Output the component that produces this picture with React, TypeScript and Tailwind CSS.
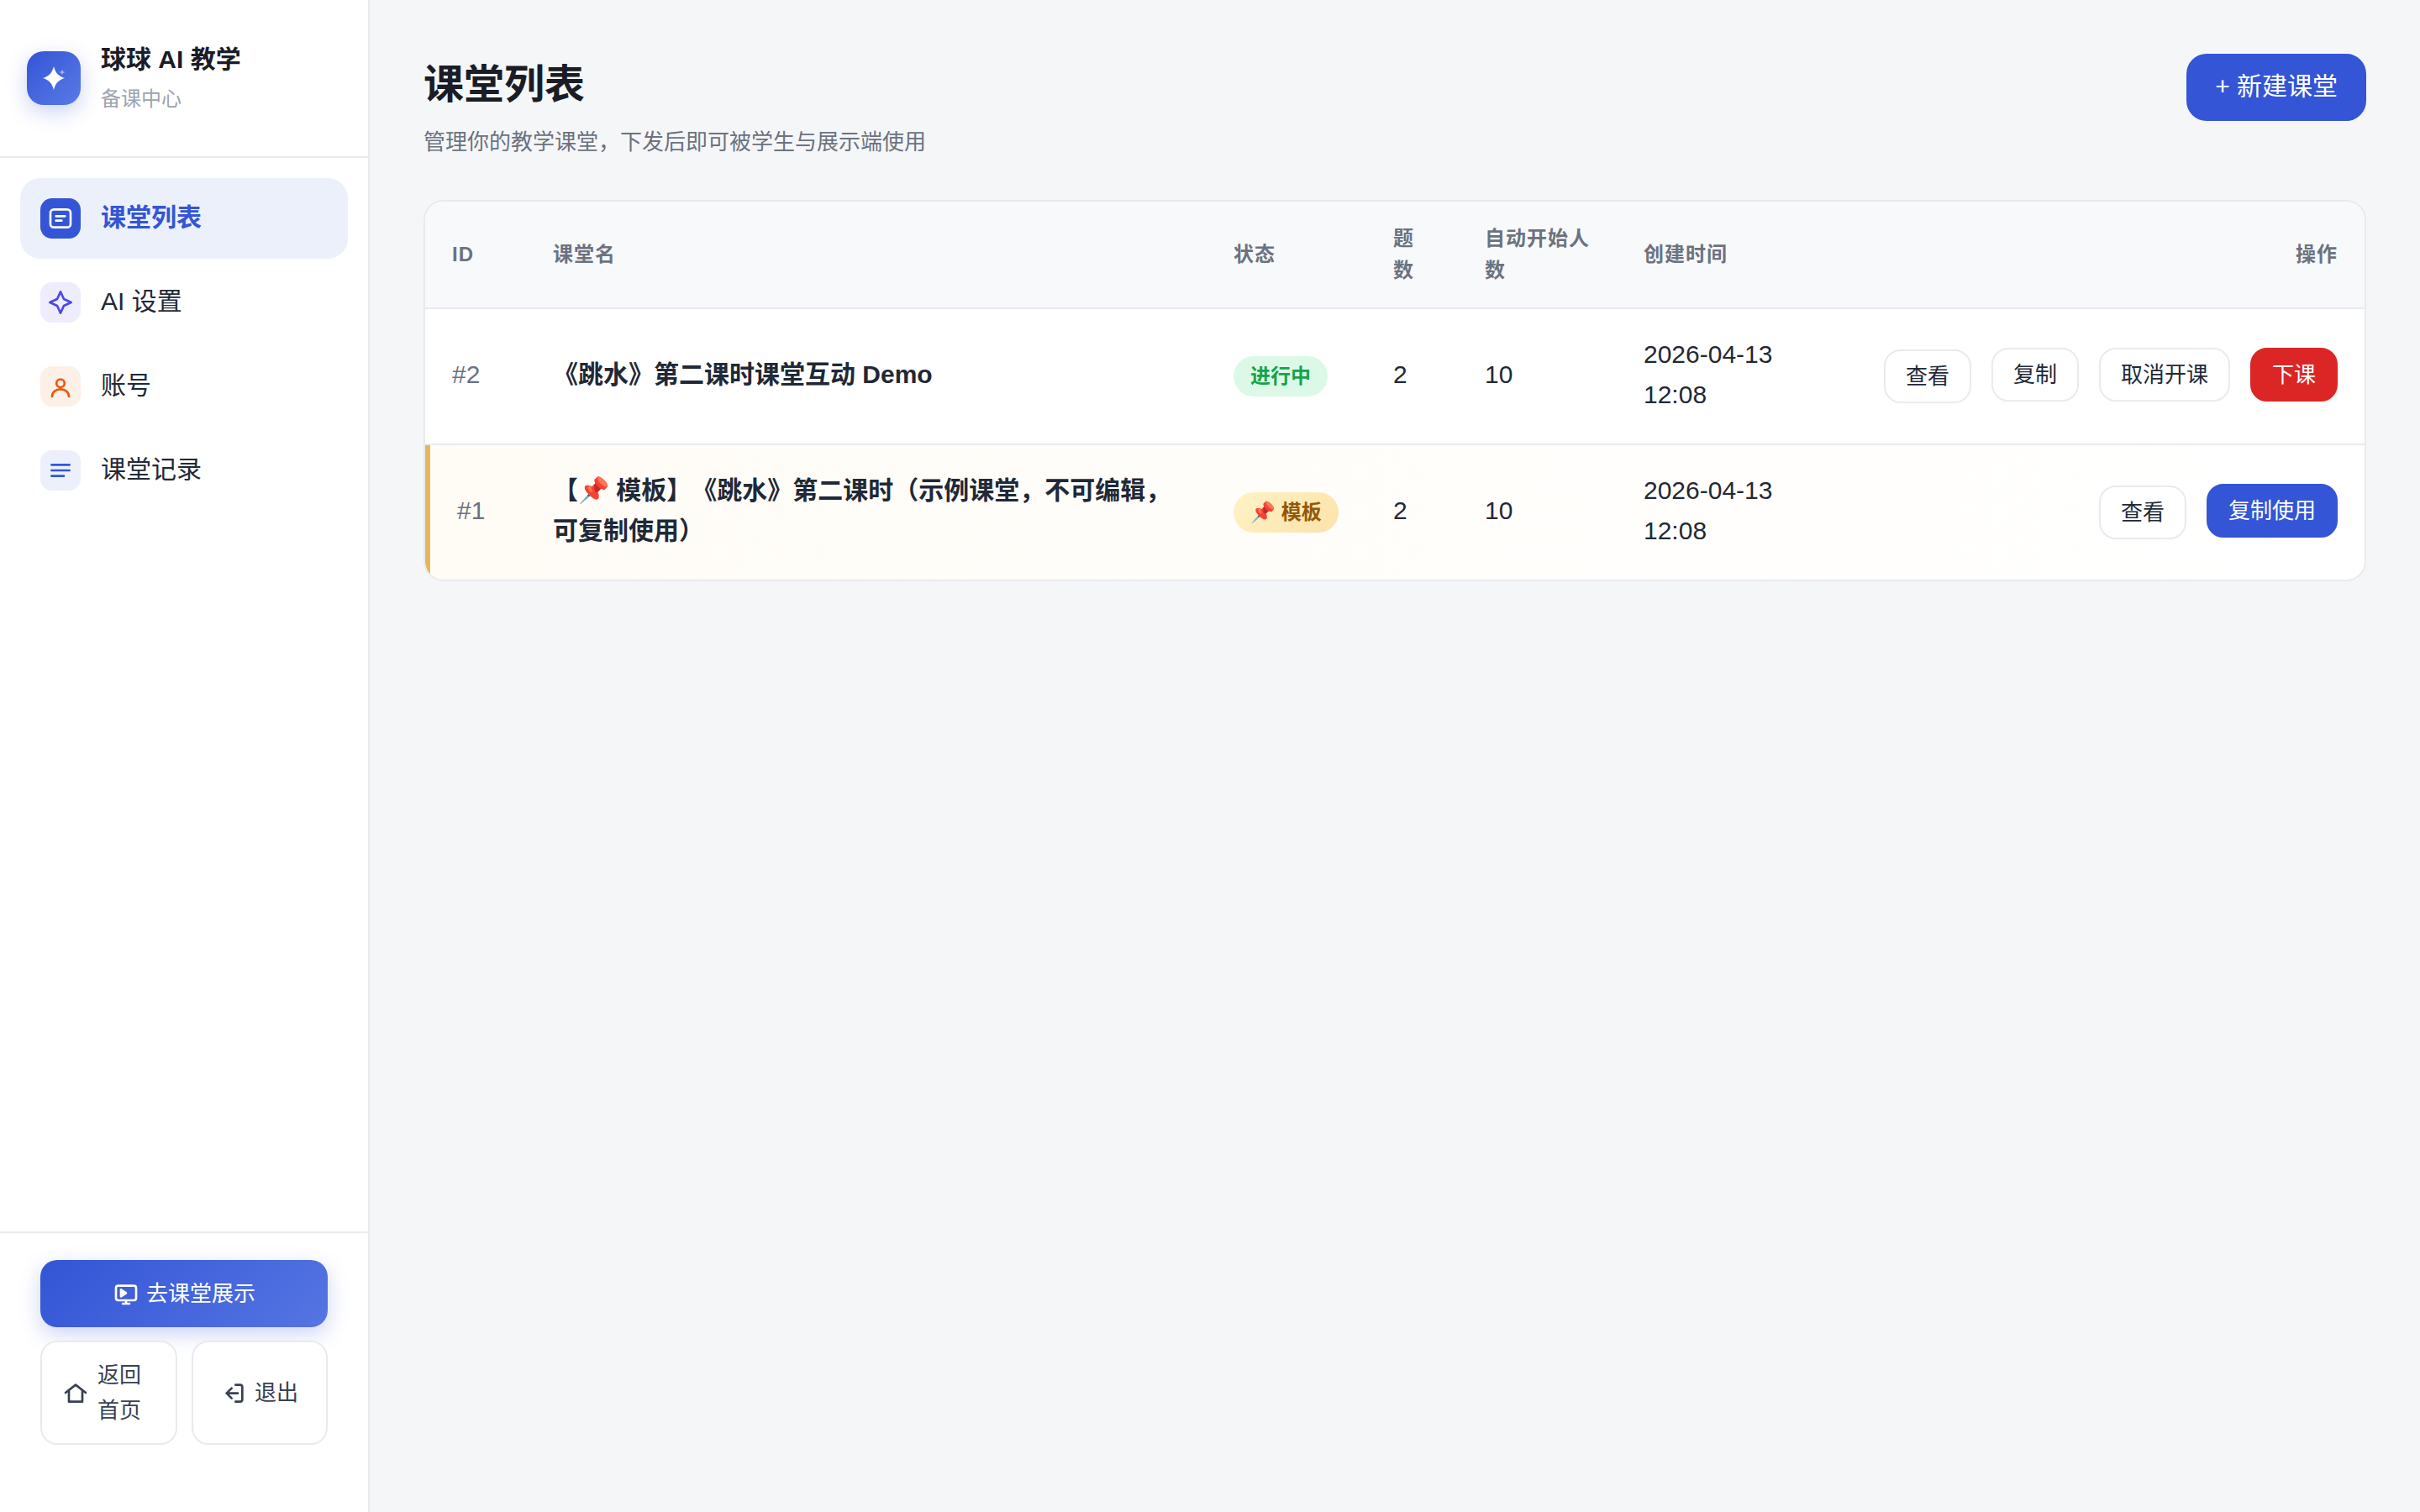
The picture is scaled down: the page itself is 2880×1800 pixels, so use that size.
const FONT_STACK = "font-['Liberation_Sans','Noto_Sans_CJK_SC',sans-serif] [text-spacing-trim:space-all]"

function LogoMark() {
  return (
    <div className="flex h-[64px] w-[64px] shrink-0 items-center justify-center rounded-[20px] bg-[linear-gradient(135deg,#3355d6,#5a7ae6)] shadow-[0_8px_24px_rgba(51,85,214,0.25)]">
      <svg width="64" height="64" viewBox="0 0 64 64" fill="#fff">
        <path d="M32 18C34 26 38 30 45 32C38 34 34 38 32 46C30 38 26 34 19 32C26 30 30 26 32 18Z" />
        <path opacity="0.5" d="M42 21C42.5 24 43 24.5 46 25C43 25.5 42.5 26 42 29C41.5 26 41 25.5 38 25C41 24.5 41.5 24 42 21Z" />
      </svg>
    </div>
  )
}

function Icon({ children, className }: { children: React.ReactNode; className?: string }) {
  return (
    <svg
      width="32"
      height="32"
      viewBox="0 0 24 24"
      fill="none"
      stroke="currentColor"
      strokeWidth="2"
      strokeLinecap="round"
      strokeLinejoin="round"
      className={`shrink-0 ${className ?? ''}`}
    >
      {children}
    </svg>
  )
}

const NAV_ITEMS = [
  {
    label: '课堂列表',
    active: true,
    box: 'bg-[#3355d6] text-white',
    icon: (
      <>
        <rect x="3" y="4" width="18" height="16" rx="3" />
        <path d="M8 10h8M8 14h5" />
      </>
    ),
  },
  {
    label: 'AI 设置',
    active: false,
    box: 'bg-[#eeedfd] text-[#4f46e5]',
    icon: <path d="M12 2.5L15 9L21.5 12L15 15L12 21.5L9 15L2.5 12L9 9Z" />,
  },
  {
    label: '账号',
    active: false,
    box: 'bg-[#fdf0e7] text-[#ea580c]',
    icon: (
      <>
        <circle cx="12" cy="9.2" r="3.6" />
        <path d="M4.5 21c0-3.8 3.2-6.5 7.5-6.5s7.5 2.7 7.5 6.5" />
      </>
    ),
  },
  {
    label: '课堂记录',
    active: false,
    box: 'bg-[#ecf0fa] text-[#3355d6]',
    icon: <path d="M4 7h16M4 12h16M4 17h11" />,
  },
]

function Sidebar() {
  return (
    <aside className="flex w-[440px] shrink-0 flex-col border-r-2 border-[#e8eaef] bg-white">
      <div className="flex h-[188px] items-center gap-[24px] border-b-2 border-[#e8eaef] px-[32px]">
        <LogoMark />
        <div className="flex flex-col pb-[2px]">
          <div className="text-[30px] leading-[48px] font-bold text-[#1a1d26]">球球 AI 教学</div>
          <div className="mt-[4px] text-[24px] leading-[38px] text-[#9ca3af]">备课中心</div>
        </div>
      </div>

      <nav className="flex flex-col gap-[4px] p-[24px]">
        {NAV_ITEMS.map((item) => (
          <div
            key={item.label}
            className={`flex h-[96px] items-center gap-[24px] rounded-[24px] px-[24px] text-[30px] ${
              item.active ? 'bg-[#ecf0fa] font-bold text-[#3355d6]' : 'text-[#1f2937]'
            }`}
          >
            <span className={`flex h-[48px] w-[48px] items-center justify-center rounded-[14px] ${item.box}`}>
              <Icon>{item.icon}</Icon>
            </span>
            <span className="pb-[4px]">{item.label}</span>
          </div>
        ))}
      </nav>

      <div className="mt-auto flex flex-col gap-[16px] border-t-2 border-[#e8eaef] px-[48px] pt-[32px] pb-[80px]">
        <button
          type="button"
          className="flex h-[80px] items-center justify-center gap-[8px] rounded-[20px] bg-[linear-gradient(135deg,#3355d6,#5575e2)] text-[26px] text-white shadow-[0_8px_24px_rgba(51,85,214,0.25)]"
        >
          <Icon>
            <rect x="3" y="5" width="18" height="13" rx="2" />
            <path d="M12 18v3M9 21h6" />
            <path d="M7.5 8.5v6l4.5-3z" fill="currentColor" />
          </Icon>
          去课堂展示
        </button>
        <div className="flex gap-[17px]">
          <button
            type="button"
            className="flex h-[124px] w-[163px] items-center justify-center gap-[10px] rounded-[20px] border-2 border-[#e8eaef] bg-white px-[24px] text-left text-[26px] leading-[42px] text-[#374151]"
          >
            <Icon>
              <path d="M3 12L12 5L21 12" />
              <path d="M6 10.5V20h12v-9.5" />
            </Icon>
            <span>返回首页</span>
          </button>
          <button
            type="button"
            className="flex h-[124px] w-[162px] items-center justify-center gap-[8px] rounded-[20px] border-2 border-[#e8eaef] bg-white px-[24px] text-[26px] leading-[42px] text-[#374151]"
          >
            <Icon>
              <path d="M13 5h4a2 2 0 0 1 2 2v11a2 2 0 0 1-2 2h-4" />
              <path d="M15 12.5H5M9.5 8L5 12.5L9.5 17" />
            </Icon>
            退出
          </button>
        </div>
      </div>
    </aside>
  )
}

function ActionButton({
  label,
  kind = 'plain',
  shifted = false,
}: {
  label: string
  kind?: 'plain' | 'danger' | 'primary'
  shifted?: boolean
}) {
  const tone = {
    plain: 'border-[#e8eaef] bg-white text-[#1f2937]',
    danger: 'border-[#dc2626] bg-[#dc2626] text-white',
    primary: 'border-[#3355d6] bg-[#3355d6] text-white',
  }[kind]
  return (
    <button
      type="button"
      className={`h-[64px] rounded-[20px] border-2 px-[24px] text-[26px] leading-[42px] whitespace-nowrap ${tone} ${
        shifted ? 'mt-[2px]' : ''
      }`}
    >
      {label}
    </button>
  )
}

const TH = 'px-[32px] text-left align-middle text-[24px] leading-[38px] font-semibold tracking-[1px] text-[#6b7280]'
const TD = 'px-[32px] pt-[30px] pb-[34px] align-middle text-[30px] leading-[48px] text-[#1f2937]'
const TD_PILL = 'px-[32px] py-[32px] align-middle'
const TD_ACTIONS = 'pr-[32px] pt-[31px] pb-[33px] align-middle'
const LINE = 'border-b-2 border-[#e8eaef]'

function ClassTable() {
  return (
    <div className="overflow-hidden rounded-[24px] border-2 border-[#e8eaef] bg-white">
      <table className="w-full table-fixed border-separate border-spacing-0">
        <colgroup>
          <col className="w-[120px]" />
          <col className="w-[810px]" />
          <col className="w-[190px]" />
          <col className="w-[109px]" />
          <col className="w-[189px]" />
          <col className="w-[284px]" />
          <col />
        </colgroup>
        <thead>
          <tr className="h-[128px] bg-[#f8f9fb]">
            <th className={`${TH} ${LINE}`}>ID</th>
            <th className={`${TH} ${LINE}`}>课堂名</th>
            <th className={`${TH} ${LINE}`}>状态</th>
            <th className={`${TH} ${LINE}`}>题数</th>
            <th className={`${TH} ${LINE}`}>自动开始人数</th>
            <th className={`${TH} ${LINE}`}>创建时间</th>
            <th className={`${TH} ${LINE} text-right`}>操作</th>
          </tr>
        </thead>
        <tbody>
          <tr>
            <td className={`${TD} ${LINE} text-[#6b7280]`}>#2</td>
            <td className={`${TD} ${LINE} font-bold text-[#1a1d26]`}>《跳水》第二课时课堂互动 Demo</td>
            <td className={`${TD_PILL} ${LINE}`}>
              <span className="inline-flex h-[48px] items-center rounded-full bg-[#dcf9e7] px-[20px] text-[24px] font-bold text-[#16a34a]">
                进行中
              </span>
            </td>
            <td className={`${TD} ${LINE}`}>2</td>
            <td className={`${TD} ${LINE}`}>10</td>
            <td className={`${TD} ${LINE}`}>2026-04-13 12:08</td>
            <td className={`${TD_ACTIONS} ${LINE}`}>
              <div className="flex items-start justify-end gap-[24px]">
                <ActionButton label="查看" shifted />
                <ActionButton label="复制" />
                <ActionButton label="取消开课" />
                <ActionButton label="下课" kind="danger" />
              </div>
            </td>
          </tr>
          <tr className="bg-[linear-gradient(90deg,#fffcf6,#ffffff)]">
            <td className={`${TD} border-l-[6px] border-[#e5b75c] text-[#6b7280]`}>#1</td>
            <td className={`${TD} font-bold text-[#1a1d26]`}>【📌 模板】《跳水》第二课时（示例课堂，不可编辑，可复制使用）</td>
            <td className={TD_PILL}>
              <span className="inline-flex h-[48px] items-center rounded-full bg-[linear-gradient(135deg,#fef3c7,#fde2a8)] px-[20px] text-[24px] font-bold text-[#92580a]">
                📌 模板
              </span>
            </td>
            <td className={TD}>2</td>
            <td className={TD}>10</td>
            <td className={TD}>2026-04-13 12:08</td>
            <td className={TD_ACTIONS}>
              <div className="flex items-start justify-end gap-[24px]">
                <ActionButton label="查看" shifted />
                <ActionButton label="复制使用" kind="primary" />
              </div>
            </td>
          </tr>
        </tbody>
      </table>
    </div>
  )
}

export default function App() {
  return (
    <div className={`flex min-h-screen w-full ${FONT_STACK}`}>
      <Sidebar />
      <main className="flex-1 bg-[#f5f6f8] px-[64px] pt-[64px]">
        <div className="flex items-start justify-between">
          <div className="pt-[2px]">
            <h1 className="text-[48px] leading-[70px] font-bold text-[#1a1d26]">课堂列表</h1>
            <p className="mt-[12px] text-[26px] leading-[42px] text-[#6b7280]">
              管理你的教学课堂，下发后即可被学生与展示端使用
            </p>
          </div>
          <button
            type="button"
            className="flex h-[80px] items-center rounded-[24px] bg-[#3355d6] px-[34px] pb-[3px] text-[30px] text-white"
          >
            + 新建课堂
          </button>
        </div>
        <div className="mt-[48px]">
          <ClassTable />
        </div>
      </main>
    </div>
  )
}
